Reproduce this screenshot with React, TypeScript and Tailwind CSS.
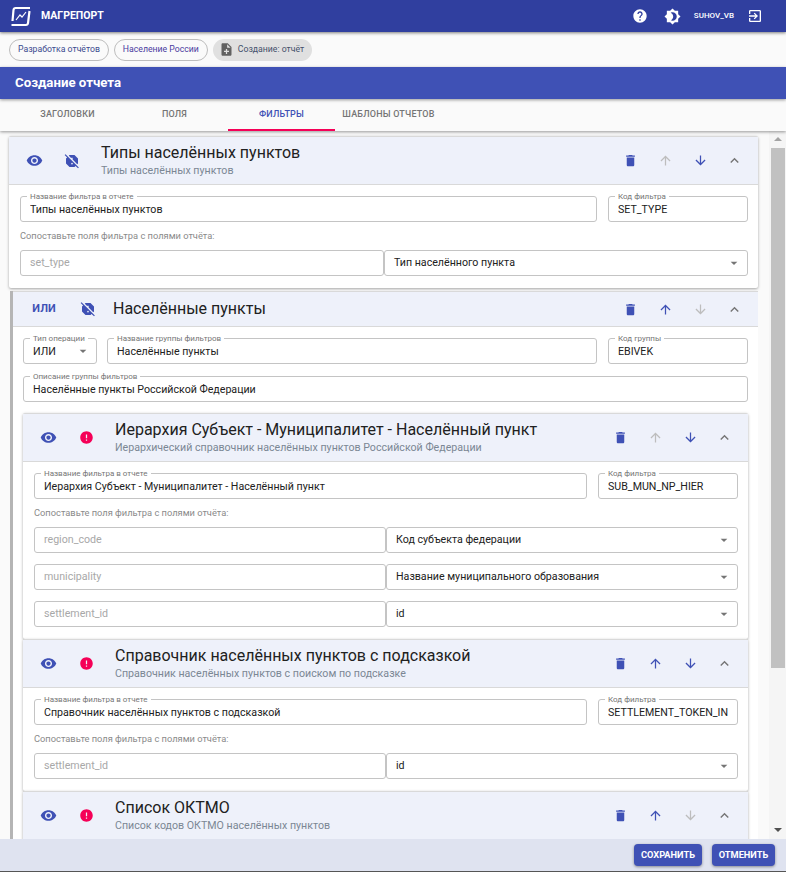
import {
  MdArrowDownward,
  MdArrowDropDown,
  MdArrowUpward,
  MdBrightness4,
  MdDelete,
  MdError,
  MdExitToApp,
  MdExpandLess,
  MdHelp,
  MdNoteAdd,
  MdReportOff,
  MdVisibility,
} from "react-icons/md";

const tabs = ["Заголовки", "Поля", "Фильтры", "Шаблоны отчетов"];

const Field = ({
  label,
  value,
  className = "",
  select = false,
}: {
  label: string;
  value: string;
  className?: string;
  select?: boolean;
}) => (
  <div
    className={`relative flex h-[26px] items-center rounded-[3px] border border-[#c4c4c4] bg-white pl-[9px] pr-[5px] text-[10.65px] text-[#212121] ${className}`}
  >
    <span className="absolute -top-[5px] left-[6px] bg-white px-[3px] text-[8px] leading-[9px] text-[#757575]">
      {label}
    </span>
    <span className="flex-1 overflow-hidden whitespace-nowrap pt-[1px]">{value}</span>
    {select && <MdArrowDropDown size={16} className="shrink-0 text-[#757575]" />}
  </div>
);

const MapRow = ({ name, field }: { name: string; field: string }) => (
  <div className="grid grid-cols-[1fr_1fr]">
    <div className="flex h-[26px] items-center rounded-[3px] border border-[#c4c4c4] bg-white pl-[9px] text-[10.65px] text-[#a8a8a8]">
      {name}
    </div>
    <div className="flex h-[26px] items-center rounded-[3px] border border-[#c4c4c4] bg-white pl-[9px] pr-[5px] text-[10.65px] text-[#212121]">
      <span className="flex-1">{field}</span>
      <MdArrowDropDown size={16} className="text-[#757575]" />
    </div>
  </div>
);

const Actions = ({ up, down }: { up: boolean; down: boolean }) => (
  <div className="flex items-center">
    <span className="flex w-[35px] justify-center text-[#3f51b5]">
      <MdDelete size={15} />
    </span>
    <span className={`flex w-[35px] justify-center ${up ? "text-[#3f51b5]" : "text-[#bdbdbd]"}`}>
      <MdArrowUpward size={15} />
    </span>
    <span className={`flex w-[34px] justify-center ${down ? "text-[#3f51b5]" : "text-[#bdbdbd]"}`}>
      <MdArrowDownward size={15} />
    </span>
    <span className="flex w-[34px] justify-center text-[#757575]">
      <MdExpandLess size={17} />
    </span>
  </div>
);

const CardHeader = ({
  title,
  subtitle,
  broken,
  up,
  down,
}: {
  title: string;
  subtitle: string;
  broken: boolean;
  up: boolean;
  down: boolean;
}) => (
  <div className="flex h-[48px] items-center border-b border-[#d9d9d9] bg-[#eef1fa] pr-[7px]">
    <span className="flex w-[50px] justify-center text-[#3f51b5]">
      <MdVisibility size={17} />
    </span>
    <span className="flex w-[26px] justify-center">
      {broken ? (
        <MdError size={15} className="text-[#f50057]" />
      ) : (
        <MdReportOff size={16} className="text-[#3f51b5]" />
      )}
    </span>
    <div className="ml-[16px] min-w-0 flex-1">
      <div className="whitespace-nowrap text-[16px] leading-[20px] text-[#212121]">{title}</div>
      <div className="mt-[1px] whitespace-nowrap text-[10.65px] leading-[14px] text-[#7b8794]">{subtitle}</div>
    </div>
    <Actions up={up} down={down} />
  </div>
);

const FilterCard = ({
  title,
  subtitle,
  code,
  rows,
  broken = true,
  up = true,
  down = true,
}: {
  title: string;
  subtitle: string;
  code: string;
  rows: { name: string; field: string }[];
  broken?: boolean;
  up?: boolean;
  down?: boolean;
}) => (
  <section className="rounded-[2px] border-t border-[#d9d9d9] bg-white shadow-[0_1px_3px_rgba(0,0,0,0.35)]">
    <CardHeader title={title} subtitle={subtitle} broken={broken} up={up} down={down} />
    <div className="pb-[12px] pl-[11px] pr-[10px] pt-[11px]">
      <div className="grid grid-cols-[1fr_140px] gap-[11px]">
        <Field label="Название фильтра в отчете" value={title} />
        <Field label="Код фильтра" value={code} />
      </div>
      <p className="my-[7px] text-[9.3px] leading-[14px] text-[#8a8a8a]">
        Сопоставьте поля фильтра с полями отчёта:
      </p>
      <div className="flex flex-col gap-[11px]">
        {rows.map((row) => (
          <MapRow key={row.name} name={row.name} field={row.field} />
        ))}
      </div>
    </div>
  </section>
);

export default function App() {
  return (
    <div className="flex h-[872px] w-[786px] flex-col overflow-hidden bg-[#fafafa] font-['Roboto',sans-serif]">
      <header className="relative z-30 flex h-[32px] shrink-0 items-center bg-[#303f9f] pl-[10px] pr-[23px] text-white shadow-[0_1px_3px_rgba(0,0,0,0.5)]">
        <svg width="21" height="21" viewBox="0 0 21 21" fill="none" stroke="white" strokeWidth="2.2" className="shrink-0">
          <path d="M2.5 15 L3.5 4 Q3.7 2 5.7 2 H20" />
          <path d="M19.5 5 L18 17 Q17.8 19 15.8 19 H1.5" />
          <path d="M6 14 L10 9 L12 11 L16 6" strokeWidth="1.2" />
        </svg>
        <span className="ml-[10px] text-[10.5px] font-bold">МАГРЕПОРТ</span>
        <div className="ml-auto flex items-center">
          <MdHelp size={16} />
          <MdBrightness4 size={17} className="ml-[16px]" />
          <span className="ml-[13px] text-[8px] font-medium">SUHOV_VB</span>
          <MdExitToApp size={16} className="ml-[13px]" />
        </div>
      </header>

      <nav className="flex h-[35px] shrink-0 items-center gap-[5px] pl-[9px] text-[8.7px]">
        <span className="flex h-[22px] items-center rounded-full border border-[#bdbdbd] px-[8px] text-[#3a4a8f]">
          Разработка отчётов
        </span>
        <span className="flex h-[22px] items-center rounded-full border border-[#bdbdbd] px-[8px] text-[#4a3a9f]">
          Население России
        </span>
        <span className="flex h-[22px] items-center rounded-full bg-[#e0e0e0] pl-[6px] pr-[8px] text-[#44506b]">
          <MdNoteAdd size={15} className="text-[#616161]" />
          <span className="ml-[4px]">Создание: отчёт</span>
        </span>
      </nav>

      <div className="relative z-20 flex h-[32px] shrink-0 items-center bg-[#3f51b5] pl-[15px] text-[13.25px] font-bold text-white shadow-[0_1px_3px_rgba(0,0,0,0.4)]">
        Создание отчета
      </div>

      <div className="relative z-10 flex h-[32px] shrink-0 bg-[#fafafa] pl-[14px] shadow-[0_1px_3px_rgba(0,0,0,0.4)]">
        {tabs.map((tab, i) => (
          <div
            key={tab}
            className={`flex w-[107px] items-center justify-center whitespace-nowrap border-b-2 pt-[2px] text-[9px] font-medium uppercase tracking-[0.2px] ${
              i === 2 ? "border-[#f50057] text-[#3f51b5]" : "border-transparent text-[#757575]"
            }`}
          >
            {tab}
          </div>
        ))}
      </div>

      <div className="flex min-h-0 flex-1">
        <main className="min-w-0 flex-1 overflow-hidden pl-[9px] pr-[11px] pt-[5px]">
          <FilterCard
            title="Типы населённых пунктов"
            subtitle="Типы населённых пунктов"
            code="SET_TYPE"
            broken={false}
            up={false}
            rows={[{ name: "set_type", field: "Тип населённого пункта" }]}
          />

          <div className="ml-px mt-[3px] border-l-[3px] border-[#b5b5b5] bg-white">
            <div className="flex h-[36px] items-center border-y border-[#d9d9d9] bg-[#eef1fa] pr-[7px]">
              <span className="flex w-[62px] justify-center text-[11px] font-bold text-[#3f51b5]">ИЛИ</span>
              <span className="flex w-[26px] justify-center text-[#3f51b5]">
                <MdReportOff size={16} />
              </span>
              <span className="ml-[12px] flex-1 text-[16px] text-[#212121]">Населённые пункты</span>
              <Actions up down={false} />
            </div>
            <div className="pl-[10px] pr-[10px] pt-[11px]">
              <div className="grid grid-cols-[74px_1fr_140px] gap-x-[10px]">
                <Field label="Тип операции" value="ИЛИ" select />
                <Field label="Название группы фильтров" value="Населённые пункты" className="mr-px" />
                <Field label="Код группы" value="EBIVEK" />
              </div>
              <Field label="Описание группы фильтров" value="Населённые пункты Российской Федерации" className="mt-[12px]" />
              <div className="mt-[11px] flex flex-col">
                <FilterCard
                  title="Иерархия Субъект - Муниципалитет - Населённый пункт"
                  subtitle="Иерархический справочник населённых пунктов Российской Федерации"
                  code="SUB_MUN_NP_HIER"
                  up={false}
                  rows={[
                    { name: "region_code", field: "Код субъекта федерации" },
                    { name: "municipality", field: "Название муниципального образования" },
                    { name: "settlement_id", field: "id" },
                  ]}
                />
                <FilterCard
                  title="Справочник населённых пунктов с подсказкой"
                  subtitle="Справочник населённых пунктов с поиском по подсказке"
                  code="SETTLEMENT_TOKEN_IN"
                  rows={[{ name: "settlement_id", field: "id" }]}
                />
                <FilterCard
                  title="Список ОКТМО"
                  subtitle="Список кодов ОКТМО населённых пунктов"
                  code="OKTMO"
                  down={false}
                  rows={[{ name: "oktmo", field: "id" }]}
                />
              </div>
            </div>
          </div>
        </main>

        <div className="flex w-[17px] shrink-0 flex-col items-center bg-[#f5f5f5] pt-[6px]">
          <span className="h-0 w-0 border-x-[4px] border-b-[4px] border-x-transparent border-b-[#a3a3a3]" />
          <span className="mt-[7px] h-[520px] w-[14px] bg-[#c1c1c1]" />
          <span className="mb-[7px] mt-auto h-0 w-0 border-x-[4px] border-t-[4px] border-x-transparent border-t-[#505050]" />
        </div>
      </div>

      <footer className="relative z-10 flex h-[33px] shrink-0 items-start justify-end gap-[10px] border-b border-[#555] bg-[#dfe3f0] pr-[11px] pt-[5px]">
        <button type="button" className="h-[22px] w-[68px] rounded-[4px] bg-[#3f51b5] text-[9.25px] font-bold text-white shadow-[0_1px_3px_rgba(0,0,0,0.4)]">
          СОХРАНИТЬ
        </button>
        <button type="button" className="h-[22px] w-[63px] rounded-[4px] bg-[#3f51b5] text-[9.25px] font-bold text-white shadow-[0_1px_3px_rgba(0,0,0,0.4)]">
          ОТМЕНИТЬ
        </button>
      </footer>
    </div>
  );
}
